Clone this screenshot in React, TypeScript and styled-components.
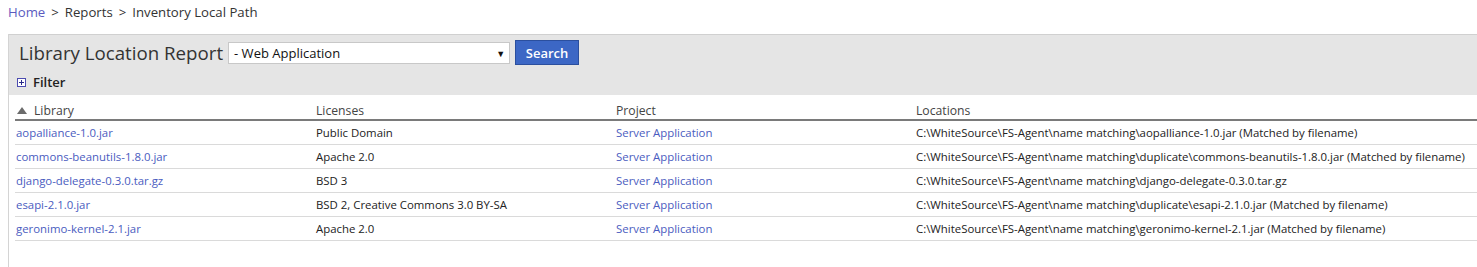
import React, { FC } from "react";
import styled, { createGlobalStyle } from "styled-components";

type Row = {
  library: string;
  license: string;
  project: string;
  location: string;
};

const rows: Row[] = [
  {
    library: "aopalliance-1.0.jar",
    license: "Public Domain",
    project: "Server Application",
    location:
      "C:\\WhiteSource\\FS-Agent\\name matching\\aopalliance-1.0.jar (Matched by filename)",
  },
  {
    library: "commons-beanutils-1.8.0.jar",
    license: "Apache 2.0",
    project: "Server Application",
    location:
      "C:\\WhiteSource\\FS-Agent\\name matching\\duplicate\\commons-beanutils-1.8.0.jar (Matched by filename)",
  },
  {
    library: "django-delegate-0.3.0.tar.gz",
    license: "BSD 3",
    project: "Server Application",
    location:
      "C:\\WhiteSource\\FS-Agent\\name matching\\django-delegate-0.3.0.tar.gz",
  },
  {
    library: "esapi-2.1.0.jar",
    license: "BSD 2, Creative Commons 3.0 BY-SA",
    project: "Server Application",
    location:
      "C:\\WhiteSource\\FS-Agent\\name matching\\duplicate\\esapi-2.1.0.jar (Matched by filename)",
  },
  {
    library: "geronimo-kernel-2.1.jar",
    license: "Apache 2.0",
    project: "Server Application",
    location:
      "C:\\WhiteSource\\FS-Agent\\name matching\\geronimo-kernel-2.1.jar (Matched by filename)",
  },
];

const App: FC = () => {
  return (
    <>
      <GlobalStyle />
      <Breadcrumb>
        <CrumbLink>Home</CrumbLink>
        <Sep>&gt;</Sep>
        <span>Reports</span>
        <Sep>&gt;</Sep>
        <span>Inventory Local Path</span>
      </Breadcrumb>
      <Panel>
        <PanelHeader>
          <TitleRow>
            <Title>Library Location Report</Title>
            <FakeSelect>
              <span>- Web Application</span>
              <Caret>▼</Caret>
            </FakeSelect>
            <SearchButton>Search</SearchButton>
          </TitleRow>
          <FilterRow>
            <ExpandIcon>
              <svg width="9" height="9" viewBox="0 0 9 9">
                <rect x="0.5" y="0.5" width="8" height="8" fill="#fff" stroke="#4b4bb0" />
                <path d="M2 4.5h5M4.5 2v5" stroke="#2a2a8a" strokeWidth="1" />
              </svg>
            </ExpandIcon>
            <FilterLabel>Filter</FilterLabel>
          </FilterRow>
        </PanelHeader>
        <Table>
          <colgroup>
            <col style={{ width: 300 }} />
            <col style={{ width: 300 }} />
            <col style={{ width: 300 }} />
            <col />
          </colgroup>
          <thead>
            <tr>
              <HeadCell>
                <SortArrow width="10" height="7" viewBox="0 0 10 7">
                  <path d="M0 7 L5 0 L10 7 Z" fill="#6b6b6b" />
                </SortArrow>
                Library
              </HeadCell>
              <HeadCell>Licenses</HeadCell>
              <HeadCell>Project</HeadCell>
              <HeadCell>Locations</HeadCell>
            </tr>
          </thead>
          <tbody>
            {rows.map((r) => (
              <tr key={r.library}>
                <Cell>
                  <CellLink>{r.library}</CellLink>
                </Cell>
                <Cell>{r.license}</Cell>
                <Cell>
                  <CellLink>{r.project}</CellLink>
                </Cell>
                <Cell>{r.location}</Cell>
              </tr>
            ))}
          </tbody>
        </Table>
      </Panel>
    </>
  );
};

const GlobalStyle = createGlobalStyle`
  body {
    margin: 0;
    background: #fff;
    font-family: "Open Sans", "Liberation Sans", sans-serif;
    color: #222;
    overflow: hidden;
  }
`;

const Breadcrumb = styled.div`
  display: flex;
  align-items: center;
  height: 24px;
  padding-left: 8px;
  font-size: 13.2px;
  color: #333;
`;

const CrumbLink = styled.span`
  color: #5b5bbf;
`;

const Sep = styled.span`
  margin: 0 6px;
`;

const Panel = styled.div`
  margin: 10px 0 0 8px;
  border-left: 1px solid #d4d4d4;
  height: 233px;
`;

const PanelHeader = styled.div`
  background: #e5e5e5;
  border-top: 1px solid #d0d0d0;
  padding: 5px 0 0 10px;
  height: 55px;
`;

const TitleRow = styled.div`
  display: flex;
  align-items: center;
  height: 25px;
`;

const Title = styled.div`
  font-size: 18.7px;
  color: #333;
  margin-right: 5px;
  line-height: 24px;
`;

const FakeSelect = styled.div`
  display: flex;
  align-items: center;
  justify-content: space-between;
  box-sizing: border-box;
  width: 282px;
  height: 22px;
  margin-top: 1px;
  padding: 0 4px 0 5px;
  background: #fff;
  border: 1px solid #c8c8c8;
  font-size: 13px;
  color: #111;
`;

const Caret = styled.span`
  font-size: 9px;
  color: #111;
`;

const SearchButton = styled.div`
  display: flex;
  align-items: center;
  justify-content: center;
  box-sizing: border-box;
  width: 64px;
  height: 25px;
  margin-left: 5px;
  background: #3c67c5;
  border: 1px solid #2b4f9e;
  color: #fff;
  font-size: 13px;
  font-weight: 600;
`;

const FilterRow = styled.div`
  display: flex;
  align-items: center;
  margin-top: 9px;
  margin-left: -2px;
  height: 16px;
`;

const ExpandIcon = styled.span`
  display: flex;
  width: 9px;
  height: 9px;
  margin-right: 7px;
`;

const FilterLabel = styled.span`
  font-size: 13px;
  font-weight: 600;
  color: #222;
`;

const Table = styled.table`
  border-collapse: collapse;
  margin: 3px 0 0 6px;
  width: calc(100% - 6px);
  table-layout: fixed;
`;

const HeadCell = styled.th`
  text-align: left;
  font-weight: 400;
  font-size: 12.2px;
  color: #444;
  padding: 5px 0 0 1px;
  border-bottom: 2px solid #7a7a7a;
  white-space: nowrap;
  line-height: 16px;
`;

const SortArrow = styled.svg`
  display: inline-block;
  margin: 0 7px 0 1px;
  vertical-align: 1px;
`;

const Cell = styled.td`
  font-size: 11.4px;
  color: #222;
  padding: 0 0 1px 1px;
  height: 22px;
  border-bottom: 1px solid #dadada;
  white-space: nowrap;
  vertical-align: middle;
`;

const CellLink = styled.span`
  color: #4a5cc0;
`;

export default App;
